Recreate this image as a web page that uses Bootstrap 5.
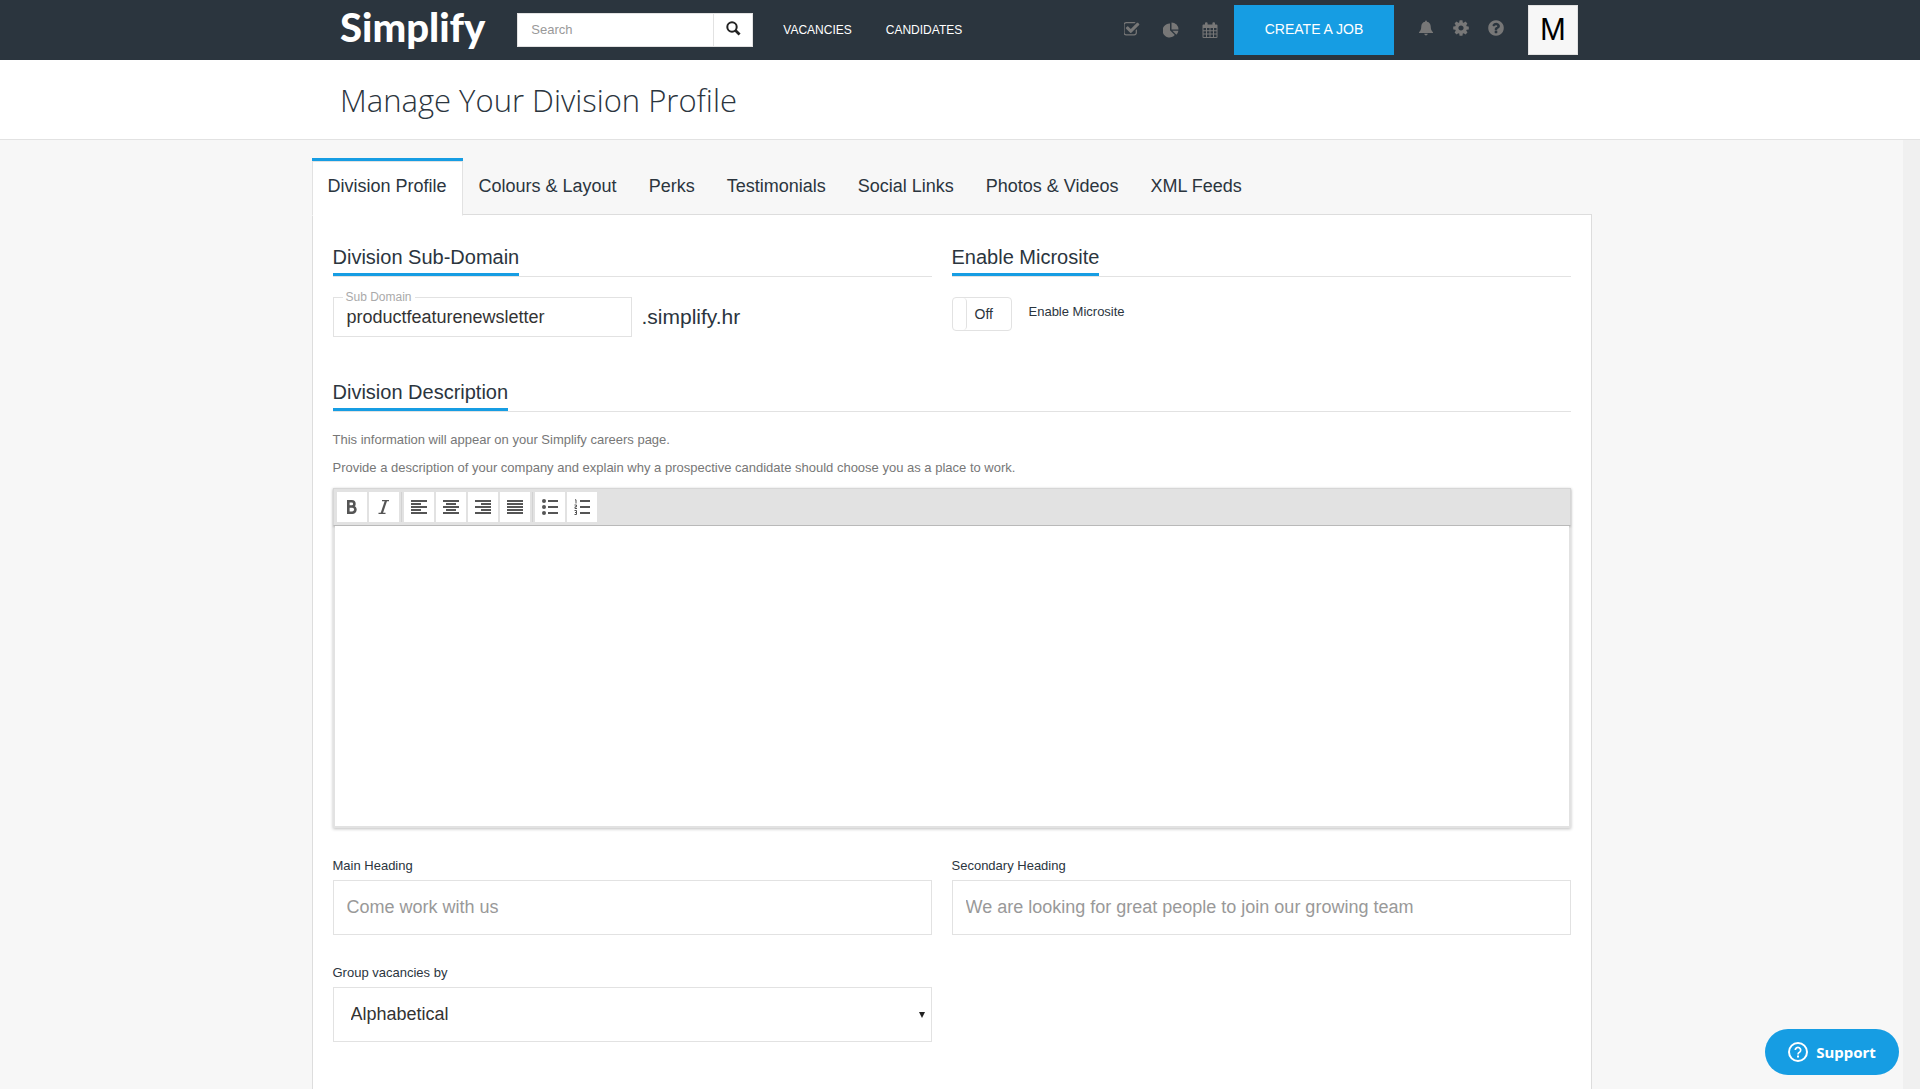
<!DOCTYPE html>
<html lang="en">
<head>
<meta charset="utf-8">
<meta name="viewport" content="width=device-width, initial-scale=1">
<title>Manage Your Division Profile</title>
<link href="https://cdn.jsdelivr.net/npm/bootstrap@5.3.0/dist/css/bootstrap.min.css" rel="stylesheet">
<style>
  :root { --ink:#2b353e; --brand:#169de3; --line:#e2e2e2; }
  body { font-family:"Liberation Sans",Arial,sans-serif; font-size:13px; line-height:20px; color:var(--ink); background:#f7f7f7; }
  .top-bar { background:var(--ink); height:60px; padding:0; }
  .bar-inner { max-width:1280px; padding:0 22px 0 20px; }
  .brand-name { font-family:Lato,"Open Sans",sans-serif; font-weight:900; font-size:40px; line-height:54px; padding-bottom:6px; color:#fff; text-decoration:none; }
  .site-search { width:236px; height:34px; margin-left:32px; }
  .site-search .form-control, .site-search .btn { border:1px solid var(--line); border-radius:0; background:#fff; font-size:13px; color:var(--ink); }
  .site-search .form-control { padding:0 13px; }
  .site-search .btn { width:40px; padding:0 0 4px; }
  ::placeholder { color:#999 !important; opacity:1; }
  .main-links { margin-left:30px; gap:34px; font-size:12px; }
  .main-links a { color:#fff; text-decoration:none; }
  .icon-set { gap:19px; }
  .icon-set a { display:flex; color:#777; }
  .create-btn { width:160px; height:50px; background:var(--brand); color:#fff; border:0; border-radius:0; font-size:14px; padding:0 0 2px; }
  .avatar-box { width:50px; height:50px; background:#f7f7f7; border:1px solid var(--line); color:#000; font-size:31px; text-decoration:none; }
  .title-bar { background:#fff; border-bottom:1px solid var(--line); height:80px; }
  .title-bar h1 { font-family:"Liberation Sans Narrow","Open Sans",sans-serif; font-weight:300; font-size:31px; line-height:80px; margin:0; }
  .scroll-track { width:17px; background:#f0f0f0; }
  .page-col { max-width:1280px; padding-top:18px; }
  .profile-tabs { border:0; }
  .profile-tabs .nav-link { color:var(--ink); font-size:18px; line-height:24px; border:1px solid transparent; border-top:0; border-radius:0; padding:13px 15px 17px; margin:0; }
  .profile-tabs .nav-link.active { color:var(--ink); background:#fff; border-color:var(--line) var(--line) #fff; box-shadow:inset 0 1px var(--line); position:relative; z-index:1; }
  .profile-tabs .nav-item { border-top:3px solid transparent; margin-bottom:-2px; }
  .profile-tabs .nav-item.current { border-color:var(--brand); }
  .panel { background:#fff; border:1px solid #ddd; padding:30px 20px; min-height:1000px; }
  .split-left { padding-right:20px; }
  .block-gap { margin-bottom:43px; }
  .sec-head { border-bottom:1px solid var(--line); margin-bottom:20px; line-height:24px; }
  .sec-head.snug { margin-bottom:18px; }
  .sec-head h2 { display:inline-block; vertical-align:bottom; font-size:20px; line-height:24px; font-weight:400; border-bottom:3px solid var(--brand); margin:0; padding-bottom:4px; }
  .sub-group { position:relative; width:299px; }
  .sub-group input { height:40px; padding:0 13px; }
  .sub-group label { position:absolute; left:10px; top:-8px; background:#fff; color:#aaa; font-size:12px; line-height:16px; padding:0 3px; }
  .panel .form-control, .panel .form-select { border:1px solid var(--line); border-radius:0; font-size:18px; color:#333; }
  .tall { height:55px; padding:0 13px; }
  .panel .form-select.tall { padding:0 17px; background-image:url("data:image/svg+xml,%3csvg xmlns='http://www.w3.org/2000/svg' viewBox='0 0 6 6'%3e%3cpath fill='%23222' d='M0 0h6L3 6z'/%3e%3c/svg%3e"); background-size:6px 6px; background-position:right 6px center; }
  .suffix { font-size:21px; margin-left:10px; }
  .off-toggle { width:60px; height:34px; border:1px solid var(--line); border-radius:4px; overflow:hidden; cursor:pointer; background:#fff; }
  .off-toggle .knob { width:14px; height:32px; border-right:1px solid var(--line); border-radius:0 4px 4px 0; }
  .off-toggle .word { font-size:14px; margin-left:8px; }
  .toggle-text { padding:5px 0 0 17px; }
  .hint { color:#777; margin:0 0 8px; }
  .editor { margin-top:10px; border:2px solid var(--line); border-top:0; box-shadow:0 1px 3px rgba(0,0,0,.25); }
  .editor-tools { margin:0 -2px; height:38px; background:#e2e2e2; padding:0 4px 0 3px; border:1px solid #d6d6d6; border-bottom-color:#b9b9b9; box-shadow:0 1px 2px rgba(0,0,0,.15); }
  .editor-tools .btn { width:30px; height:30px; padding:0; border:0; border-radius:0; background:#fff; color:#555; display:flex; align-items:center; justify-content:center; }
  .tool-set { gap:2px; }
  .tool-set + .tool-set { border-left:1px solid #d2d2d2; margin-left:2px; padding-left:2px; }
  .editor textarea { display:block; height:300px; width:100%; border:0 !important; resize:none; }
  .field-name { display:block; line-height:20px; margin-bottom:4px; }
  .support-btn { position:fixed; right:21px; bottom:14px; width:134px; height:46px; border-radius:23px; background:var(--brand); color:#fff; border:0; font-family:"Noto Sans","Open Sans",sans-serif; font-weight:700; font-size:15px; gap:8px; padding:0; }
  .btn:hover { filter:brightness(.96); }
</style>
</head>
<body class="d-flex flex-column vh-100 overflow-hidden">

<header class="navbar top-bar flex-shrink-0">
  <div class="bar-inner d-flex align-items-center w-100 mx-auto">
    <a class="brand-name" href="#">Simplify</a>
    <form class="input-group site-search" role="search">
      <input class="form-control" type="search" placeholder="Search" aria-label="Search">
      <button class="btn" type="button" aria-label="Run search">
        <svg width="15" height="15" viewBox="0 0 15 15" fill="none" stroke="#222"><circle cx="6" cy="6" r="4.7" stroke-width="2"/><path d="M9.5 9.5 13.6 13.4" stroke-width="2.8"/></svg>
      </button>
    </form>
    <nav class="d-flex main-links" aria-label="Main">
      <a href="#">VACANCIES</a>
      <a href="#">CANDIDATES</a>
    </nav>
    <div class="d-flex align-items-center ms-auto">
      <nav class="d-flex icon-set me-3" aria-label="Tools">
        <a href="#" aria-label="Tasks" class="me-1"><svg width="16" height="16" viewBox="128 128 1664 1664" fill="currentColor"><path d="M1472 930v318q0 119-84.5 203.500t-203.500 84.500h-832q-119 0-203.500-84.500t-84.500-203.500v-832q0-119 84.500-203.500t203.500-84.500h832q63 0 117 25 15 7 18 23 3 17-9 29l-49 49q-10 10-23 10-3 0-9-2-23-6-45-6h-832q-66 0-113 47t-47 113v832q0 66 47 113t113 47h832q66 0 113-47t47-113v-254q0-13 9-22l64-64q10-10 23-10 6 0 12 3 20 8 20 29zm231-489l-814 814q-24 24-57 24t-57-24l-430-430q-24-24-24-57t24-57l110-110q24-24 57-24t57 24l263 263 647-647q24-24 57-24t57 24l110 110q24 24 24 57t-24 57z"/></svg></a>
        <a href="#" aria-label="Reports" class="me-1"><svg width="16" height="16" viewBox="0 0 16 16" fill="currentColor"><path d="M7 1.500V8.300l4.800 4.800A7 7 0 1 1 7 1.500z"/><path d="M8.500.500a7 7 0 0 1 7 7h-7z"/><path d="M9.400 8.800h6a7 7 0 0 1-2 4z"/></svg></a>
        <a href="#" aria-label="Calendar"><svg width="16" height="16" viewBox="0 0 16 16"><path fill="currentColor" fill-rule="evenodd" d="M1.500 2.500H3V1.200Q3 .300 4 .300h.6q1 0 1 .9v1.300h4.800V1.200q0-.9 1-.9h.6q1 0 1 .9v1.300h1.500q1 0 1 1V15q0 1-1 1h-13q-1 0-1-1V3.500q0-1 1-1zM1.500 6v2.200H4V6zM5 6v2.200h2.500V6zm3.500 0v2.200H11V6zM12 6v2.200h2.500V6zM1.500 9.200v2.300H4V9.200zm3.500 0v2.300h2.500V9.200zm3.500 0v2.300H11V9.200zm3.500 0v2.300h2.500V9.200zM1.500 12.500V15H4v-2.500zm3.500 0V15h2.500v-2.500zm3.500 0V15H11v-2.500zm3.500 0V15h2.500v-2.500z"/></svg></a>
      </nav>
      <button class="btn create-btn" type="button">CREATE A JOB</button>
      <nav class="d-flex icon-set mx-4 pb-1" aria-label="Account">
        <a href="#" aria-label="Notifications"><svg width="16" height="16" viewBox="0 0 16 16" fill="currentColor"><path d="M8 .500q.9 0 1 1.200C11.500 2.200 12.600 4 12.700 6.300c.1 3 .6 4.500 2.300 5.900v.8H1v-.8c1.700-1.400 2.200-2.900 2.300-5.900C3.400 4 4.500 2.200 7 1.700Q7.100.500 8 .500zM6.200 13.800h3.600Q9.500 15.500 8 15.500T6.200 13.800z"/></svg></a>
        <a href="#" aria-label="Settings"><svg width="16" height="16" viewBox="108 108 1576 1576" fill="currentColor"><path fill-rule="evenodd" d="M1152 896q0-106-75-181t-181-75-181 75-75 181 75 181 181 75 181-75 75-181zm512-109v222q0 12-8 23t-20 13l-185 28q-19 54-39 91 35 50 107 138 10 12 10 25t-9 23q-27 37-99 108t-94 71q-12 0-26-9l-138-108q-44 23-91 38-16 136-29 186-7 28-36 28h-222q-14 0-24.500-8.500t-11.500-21.500l-28-184q-49-16-90-37l-141 107q-10 9-25 9-14 0-25-11-126-114-165-168-7-10-7-23 0-12 8-23 15-21 51-66.500t54-70.500q-27-50-41-99l-183-27q-13-2-21-12.500t-8-23.500v-222q0-12 8-23t19-13l186-28q14-46 39-92-40-57-107-138-10-12-10-24 0-10 9-23 26-36 98.500-107.500t94.500-71.500q13 0 26 10l138 107q44-23 91-38 16-136 29-186 7-28 36-28h222q14 0 24.500 8.500t11.500 21.500l28 184q49 16 90 37l142-107q9-9 24-9 13 0 25 10 129 119 165 170 7 8 7 22 0 12-8 23-15 21-51 66.500t-54 70.500q26 50 41 98l183 28q13 2 21 12.500t8 23.500z"/></svg></a>
        <a href="#" aria-label="Help"><svg width="16" height="16" viewBox="108 108 1576 1576" fill="currentColor"><path fill-rule="evenodd" d="M1024 1376v-192q0-14-9-23t-23-9h-192q-14 0-23 9t-9 23v192q0 14 9 23t23 9h192q14 0 23-9t9-23zm256-672q0-88-55.500-163t-138.500-116-170-41q-243 0-371 213-15 24 8 42l132 100q7 6 19 6 16 0 25-12 53-68 86-92 34-24 86-24 48 0 85.500 26t37.500 59q0 38-20 61t-68 45q-63 28-115.500 86.500t-52.500 125.500v36q0 14 9 23t23 9h192q14 0 23-9t9-23q0-19 21.500-49.500t54.500-49.500q32-18 49-28.500t46-35 44.500-48 28-60.500 12.500-81zm384 192q0 209-103 385.500t-279.500 279.500-385.500 103-385.500-103-279.500-279.500-103-385.500 103-385.500 279.500-279.500 385.500-103 385.500 103 279.500 279.500 103 385.500z"/></svg></a>
      </nav>
      <a class="avatar-box d-flex align-items-center justify-content-center" href="#">M</a>
    </div>
  </div>
</header>

<div class="title-bar flex-shrink-0">
  <div class="bar-inner mx-auto"><h1>Manage Your Division Profile</h1></div>
</div>

<div class="d-flex flex-grow-1 overflow-hidden">
  <main class="flex-grow-1 overflow-hidden">
    <div class="page-col mx-auto">
      <ul class="nav nav-tabs profile-tabs">
        <li class="nav-item current"><a class="nav-link active" href="#" aria-current="page">Division Profile</a></li>
        <li class="nav-item"><a class="nav-link" href="#">Colours &amp; Layout</a></li>
        <li class="nav-item"><a class="nav-link" href="#">Perks</a></li>
        <li class="nav-item"><a class="nav-link" href="#">Testimonials</a></li>
        <li class="nav-item"><a class="nav-link" href="#">Social Links</a></li>
        <li class="nav-item"><a class="nav-link" href="#">Photos &amp; Videos</a></li>
        <li class="nav-item"><a class="nav-link" href="#">XML Feeds</a></li>
      </ul>
      <form class="panel">
        <div class="row g-0 block-gap">
          <section class="col-6 split-left">
            <div class="sec-head"><h2>Division Sub-Domain</h2></div>
            <div class="d-flex align-items-center">
              <div class="sub-group">
                <input class="form-control" id="sub" type="text" value="productfeaturenewsletter">
                <label for="sub">Sub Domain</label>
              </div>
              <span class="suffix">.simplify.hr</span>
            </div>
          </section>
          <section class="col-6">
            <div class="sec-head"><h2>Enable Microsite</h2></div>
            <div class="d-flex">
              <label class="off-toggle d-flex align-items-center" for="micro">
                <input class="visually-hidden" type="checkbox" id="micro">
                <span class="knob"></span><span class="word">Off</span>
              </label>
              <label class="toggle-text" for="micro">Enable Microsite</label>
            </div>
          </section>
        </div>

        <section>
          <div class="sec-head snug"><h2>Division Description</h2></div>
          <p class="hint">This information will appear on your Simplify careers page.</p>
          <p class="hint">Provide a description of your company and explain why a prospective candidate should choose you as a place to work.</p>
          <div class="editor">
            <div class="editor-tools d-flex align-items-center" role="toolbar" aria-label="Formatting">
              <div class="tool-set d-flex">
                <button class="btn" type="button" aria-label="Bold"><svg width="16" height="16" viewBox="0 0 16 16" fill="none" stroke="currentColor" stroke-width="2.600"><path d="M4.300 2.300H7.800a2.600 2.600 0 0 1 0 5.200H4.300M7.800 7.500h.5a3 3 0 0 1 0 6.200H4.300V1"/></svg></button>
                <button class="btn" type="button" aria-label="Italic"><svg width="16" height="16" viewBox="0 0 16 16" fill="none" stroke="currentColor"><path d="M6 1.700h7M2.500 14.300h7" stroke-width="1.200"/><path d="M10 1.700 5.700 14.300" stroke-width="2.200"/></svg></button>
              </div>
              <div class="tool-set d-flex">
                <button class="btn" type="button" aria-label="Align left"><svg width="16" height="16" viewBox="0 0 16 16" fill="currentColor"><path d="M0 1h16v2H0zM0 4h10v2H0zM0 7h16v2H0zM0 10h10v2H0zM0 13h16v2H0z"/></svg></button>
                <button class="btn" type="button" aria-label="Align centre"><svg width="16" height="16" viewBox="0 0 16 16" fill="currentColor"><path d="M0 1h16v2H0zM3 4h10v2H3zM0 7h16v2H0zM3 10h10v2H3zM0 13h16v2H0z"/></svg></button>
                <button class="btn" type="button" aria-label="Align right"><svg width="16" height="16" viewBox="0 0 16 16" fill="currentColor"><path d="M0 1h16v2H0zM6 4h10v2H6zM0 7h16v2H0zM6 10h10v2H6zM0 13h16v2H0z"/></svg></button>
                <button class="btn" type="button" aria-label="Justify"><svg width="16" height="16" viewBox="0 0 16 16" fill="currentColor"><path d="M0 1h16v2H0zM0 4h16v2H0zM0 7h16v2H0zM0 10h16v2H0zM0 13h16v2H0z"/></svg></button>
              </div>
              <div class="tool-set d-flex">
                <button class="btn" type="button" aria-label="Bullet list"><svg width="16" height="16" viewBox="0 0 16 16" fill="currentColor"><circle cx="2" cy="2" r="2"/><circle cx="2" cy="8" r="2"/><circle cx="2" cy="14" r="2"/><path d="M6 1h10v2H6zM6 7h10v2H6zM6 13h10v2H6z"/></svg></button>
                <button class="btn" type="button" aria-label="Numbered list"><svg width="16" height="16" viewBox="0 0 16 16" fill="currentColor"><path d="M6 1h10v2H6zM6 7h10v2H6zM6 13h10v2H6z"/><path fill="none" stroke="currentColor" d="M1 .800h1V4.500M.500 6h2v1.800h-1.500v1.700h2M.500 11.500h2v4h-2M1 13.500h1.500"/></svg></button>
              </div>
            </div>
            <textarea class="form-control" aria-label="Division description"></textarea>
          </div>
        </section>

        <div class="row g-0 pt-4">
          <div class="col-6 split-left pt-1">
            <label class="field-name" for="mainHead">Main Heading</label>
            <input class="form-control tall" id="mainHead" type="text" placeholder="Come work with us">
          </div>
          <div class="col-6 pt-1">
            <label class="field-name" for="secHead">Secondary Heading</label>
            <input class="form-control tall" id="secHead" type="text" placeholder="We are looking for great people to join our growing team">
          </div>
          <div class="col-6 split-left pt-4">
            <label class="field-name mt-1" for="groupBy">Group vacancies by</label>
            <select class="form-select tall" id="groupBy"><option>Alphabetical</option><option>Location</option></select>
          </div>
        </div>
      </form>
    </div>
  </main>
  <div class="scroll-track"></div>
</div>

<button class="btn support-btn d-flex align-items-center justify-content-center" type="button">
  <svg width="20" height="20" viewBox="0 0 20 20" fill="none" stroke="#fff" stroke-width="2"><circle cx="10" cy="10" r="9"/><path d="M7.300 8.100a2.700 2.700 0 1 1 4.200 2.200Q10 11.100 10 12.400" stroke-width="1.700"/><path d="M10 13.600v2" stroke-width="2"/></svg>
  Support
</button>

<script src="https://cdn.jsdelivr.net/npm/bootstrap@5.3.0/dist/js/bootstrap.bundle.min.js"></script>
</body>
</html>
